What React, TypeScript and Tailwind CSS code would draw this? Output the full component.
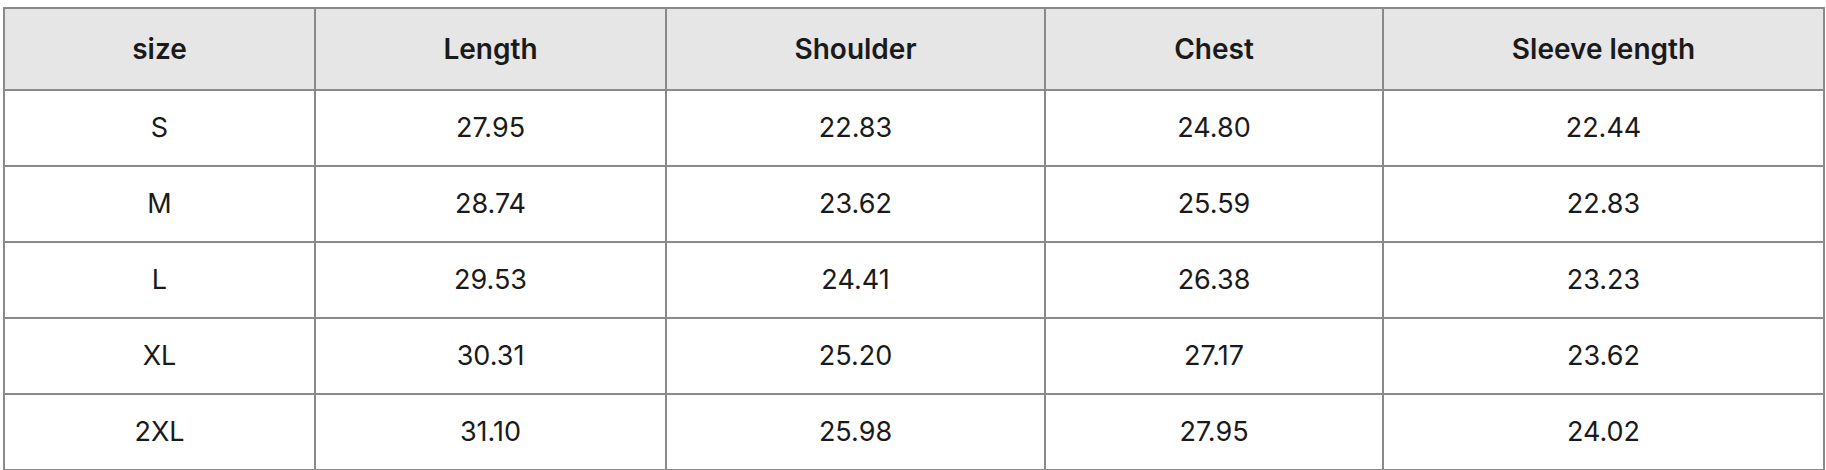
const headers = ["size", "Length", "Shoulder", "Chest", "Sleeve length"];

const rows = [
  ["S", "27.95", "22.83", "24.80", "22.44"],
  ["M", "28.74", "23.62", "25.59", "22.83"],
  ["L", "29.53", "24.41", "26.38", "23.23"],
  ["XL", "30.31", "25.20", "27.17", "23.62"],
  ["2XL", "31.10", "25.98", "27.95", "24.02"],
];

export default function App() {
  return (
    <div className="bg-white min-h-screen pl-[3px] pt-[7px] font-['Inter',sans-serif] text-[#1a1a1a]">
      {/* size chart */}
      <div className="grid w-[1822px] grid-cols-[309px_349px_377px_336px_439px] grid-rows-[80px_repeat(5,74px)] gap-[2px] bg-[#8a8a8a] p-[2px]">
        {headers.map((h) => (
          <div
            key={h}
            className="flex items-center justify-center bg-[#e6e6e6] text-[28px] font-semibold"
          >
            {h}
          </div>
        ))}
        {rows.map((r) =>
          r.map((v, i) => (
            <div key={r[0] + i} className="flex items-center justify-center bg-white text-[27px]">
              {v}
            </div>
          ))
        )}
      </div>
    </div>
  );
}
